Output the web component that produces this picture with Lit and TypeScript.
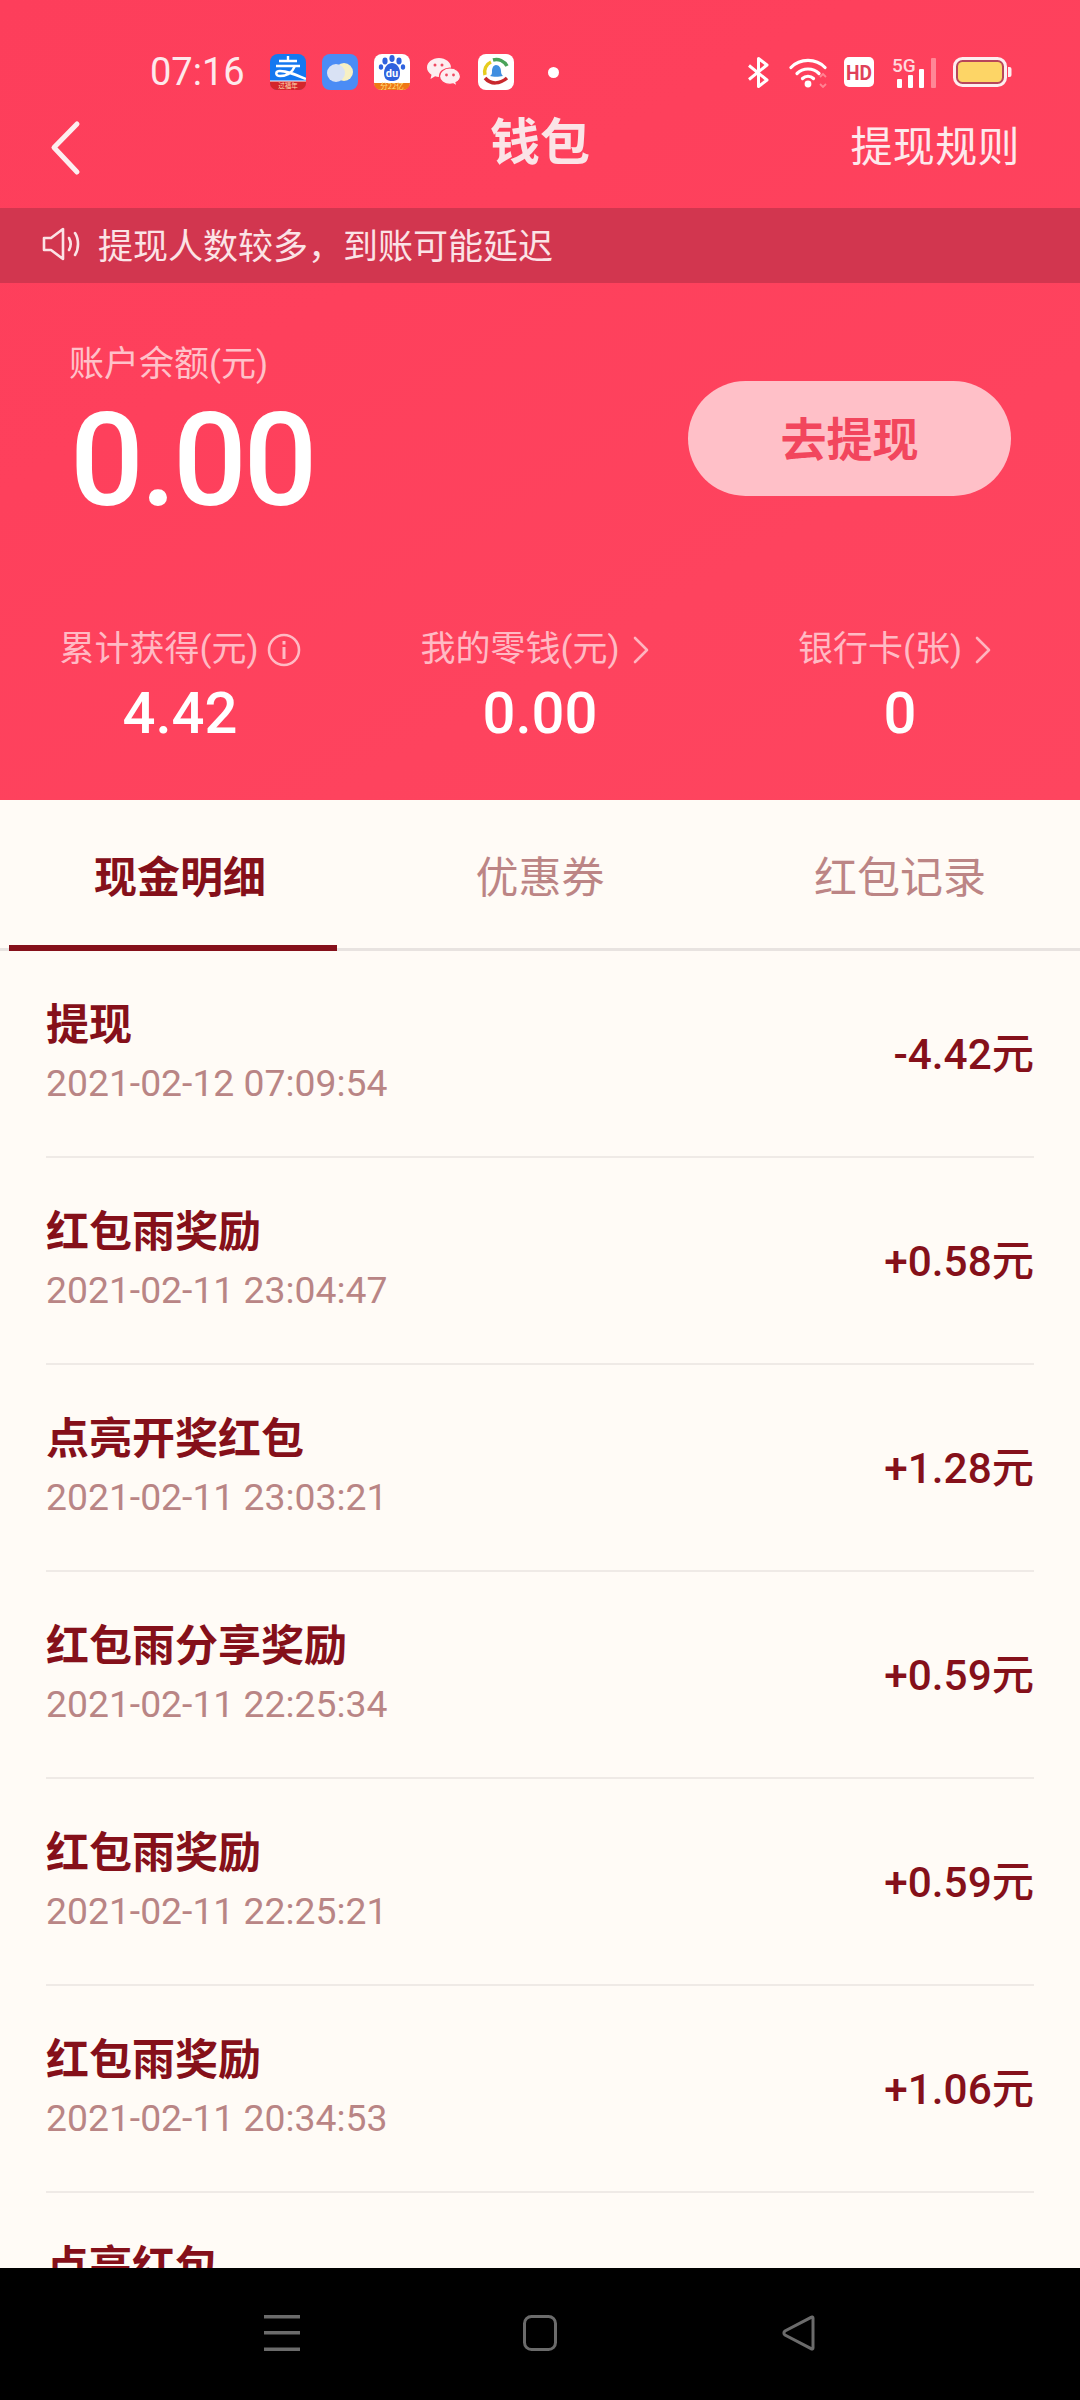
import { LitElement, html, css } from "lit";
import { customElement } from "lit/decorators.js";

const rows = [
  ["提现", "2021-02-12 07:09:54", "-4.42元"],
  ["红包雨奖励", "2021-02-11 23:04:47", "+0.58元"],
  ["点亮开奖红包", "2021-02-11 23:03:21", "+1.28元"],
  ["红包雨分享奖励", "2021-02-11 22:25:34", "+0.59元"],
  ["红包雨奖励", "2021-02-11 22:25:21", "+0.59元"],
  ["红包雨奖励", "2021-02-11 20:34:53", "+1.06元"],
  ["点亮红包", "", ""],
];

const chevron = html`<svg class="chev" width="18" height="30" viewBox="0 0 18 30"><path d="M3 3l12 12L3 27" fill="none" stroke="#ffb4bf" stroke-width="2.6" stroke-linecap="round" stroke-linejoin="round"/></svg>`;

@customElement("app-root")
export class AppRoot extends LitElement {
  static styles = css`
    :host { display: flex; flex-direction: column; width: 1080px; height: 2400px; overflow: hidden; background: #fffbf6;
      font-family: Roboto, "Noto Sans CJK SC", sans-serif; }
    .top { height: 800px; flex: none; display: flex; flex-direction: column;
      background: linear-gradient(150deg, #fd3e5b 0%, #fe405c 35%, #fe435e 70%, #fe455f 100%); }
    .status { height: 108px; flex: none; display: flex; align-items: center; padding: 36px 68px 0 150px; box-sizing: border-box; color: #fff; }
    .time { font-size: 38px; color: #fde9ec; width: 120px; flex: none; line-height: 1; }
    .apps { display: flex; gap: 16px; align-items: center; }
    .apps svg, .sys svg { display: block; flex: none; }
    .dot { width: 11px; height: 11px; border-radius: 50%; background: #fff; margin-left: 34px; flex: none; }
    .sys { margin-left: auto; display: flex; align-items: center; }
    .s1 { margin-right: 19px; }
    .s2 { margin-right: 15px; }
    .s3 { margin-right: 17px; }
    .s4 { margin-right: 16px; }
    .nav { height: 100px; flex: none; box-sizing: border-box; display: flex; align-items: center; justify-content: space-between; padding: 0 60px 20px 49px; position: relative; color: #fde9ec; }
    .nav h1 { position: absolute; left: 0; right: 0; top: 0; text-align: center; margin: 0; font-size: 50px; font-weight: 700; line-height: 70px; color: #fbe4e7; }
    .rules { font-size: 42px; line-height: 60px; letter-spacing: 0.4px; }
    .notice { height: 75px; flex: none; box-sizing: border-box; display: flex; align-items: center; gap: 16px; background: #d2364f; padding: 0 0 4px 42px; color: #fbe3e6; font-size: 35px; }
    .bal { display: flex; align-items: flex-start; justify-content: space-between; padding: 60px 69px 0 69px; height: 342px; box-sizing: border-box; flex: none; }
    .bal-label { font-size: 35px; line-height: 44px; color: #ffc1c9; }
    .bal-num { font-size: 130px; font-weight: 500; line-height: 120px; color: #fff; margin: 14px 0 0 1px; letter-spacing: -3.5px; }
    .btn { width: 323px; height: 115px; margin-top: 38px; border-radius: 58px; background: #ffc0c8; color: #f2465d; font-size: 46px; font-weight: 700;
      display: flex; align-items: center; justify-content: center; padding-bottom: 6px; box-sizing: border-box; }
    .stats { display: grid; grid-template-columns: repeat(3, 360px); }
    .stat { display: flex; flex-direction: column; align-items: center; gap: 3px; }
    .stat-label { display: flex; align-items: center; gap: 8px; font-size: 35px; line-height: 50px; color: #ffbac4; white-space: nowrap; }
    .chev { margin: 0 10px 0 4px; }
    .stat-val { font-size: 58px; font-weight: 500; line-height: 70px; color: #fff; }
    .tabs { height: 151px; flex: none; box-sizing: border-box; display: grid; grid-template-columns: repeat(3, 360px); border-bottom: 3px solid #e8e3e0; position: relative; }
    .tab { display: flex; align-items: center; justify-content: center; font-size: 43px; color: #bc8585; }
    .tab.on { color: #85101a; font-weight: 700; }
    .tabs::after { content: ""; position: absolute; left: 9px; width: 328px; bottom: -3px; height: 6px; background: #85101a; }
    .list { flex: 1; min-height: 0; overflow: hidden; padding: 0 46px; }
    .row { height: 207px; box-sizing: border-box; border-bottom: 2px solid #efeae6; display: flex; align-items: center; justify-content: space-between; }
    .left { padding-bottom: 5px; }
    .name { font-size: 43px; font-weight: 700; line-height: 60px; color: #85101a; }
    .date { font-size: 37.3px; line-height: 50px; min-height: 50px; color: #b98585; margin-top: 3px; }
    .amt { font-size: 42.3px; font-weight: 500; color: #85101a; margin-bottom: 6px; }
    .bar { height: 132px; flex: none; background: #000; display: flex; align-items: flex-start; padding-top: 47px; box-sizing: border-box; position: relative; }
    .bar-in { display: grid; grid-template-columns: 264px 36px 223px 34px 224px 36px; width: 100%; }
    .bar svg { display: block; }
  `;

  private appIcons() {
    return html`<div class="apps">
      <svg width="36" height="36" viewBox="0 0 36 36">
        <rect width="36" height="36" rx="8" fill="#1578f0"/>
        <path d="M0 27h36v2a7 7 0 0 1-7 7H7a7 7 0 0 1-7-7z" fill="#d4262c"/>
        <path d="M0 27c12 0 24 0 36 0" stroke="#fff" stroke-width="1"/>
        <path d="M9 7h18M18 2v5M6 12h24M25 12c-3 7-9 10-15 10-5 0-5-5 0-5 7 0 14 3 26 8" fill="none" stroke="#fff" stroke-width="2.400"/>
        <text x="18" y="34" font-size="6.500" fill="#ffdcae" text-anchor="middle" font-family="Noto Sans CJK SC">过福年</text>
      </svg>
      <svg width="36" height="36" viewBox="0 0 36 36">
        <rect width="36" height="36" rx="8" fill="#4b8cf5"/>
        <circle cx="22" cy="18" r="9" fill="#f6f0c4"/><circle cx="14" cy="19" r="9" fill="#d9e2f4"/>
      </svg>
      <svg width="36" height="36" viewBox="0 0 36 36">
        <rect width="36" height="36" rx="8" fill="#fff"/>
        <path d="M0 29h36v0a7 7 0 0 1-7 7H7a7 7 0 0 1-7-7z" fill="#ee7716"/>
        <g fill="#2f62de"><ellipse cx="11" cy="7" rx="2.600" ry="3.400"/><ellipse cx="25" cy="7" rx="2.600" ry="3.400"/><ellipse cx="18" cy="4.500" rx="2.600" ry="3.400"/><ellipse cx="7" cy="13" rx="2.200" ry="2.800"/><ellipse cx="29" cy="13" rx="2.200" ry="2.800"/><path d="M18 9c4 0 8 4 8 10 0 6-3 8-8 8s-8-2-8-8c0-6 4-10 8-10z"/></g>
        <text x="18" y="23" font-size="11" font-weight="700" fill="#fff" text-anchor="middle" font-family="Roboto">du</text>
        <text x="18" y="35" font-size="7.500" fill="#ffe27c" text-anchor="middle" font-family="Noto Sans CJK SC">分22亿</text>
      </svg>
      <svg width="36" height="36" viewBox="0 0 36 36">
        <path d="M13 4C6.500 4 1 8.300 1 13.500c0 3 1.800 5.400 4.500 7.200L4.500 25l4.600-2.700c1.300.4 2.600.6 3.900.6 6.500 0 12-4.200 12-9.400S19.500 4 13 4z" fill="#fdeef0"/>
        <path d="M24 14c-6 0-10.500 3.700-10.500 8.200S18 30.400 24 30.400c1 0 2.200-.2 3.200-.5l3.800 2.200-1-3.500c2.700-1.500 4.500-3.900 4.500-6.400C34.500 17.700 30 14 24 14z" fill="#fdeef0" stroke="#fe3f5b" stroke-width="1.200"/>
        <g fill="#f04a62"><circle cx="9" cy="11" r="1.500"/><circle cx="16" cy="11" r="1.500"/><circle cx="20.500" cy="21" r="1.400"/><circle cx="27.500" cy="21" r="1.400"/></g>
      </svg>
      <svg width="36" height="36" viewBox="0 0 36 36">
        <rect width="36" height="36" rx="8" fill="#fff"/>
        <path d="M7 21a11 11 0 0 1 6-13" fill="none" stroke="#e7cc1d" stroke-width="3.500"/>
        <path d="M15 6a12 12 0 0 1 14 6" fill="none" stroke="#4aa35a" stroke-width="3.500"/>
        <path d="M7 24c6 7 15 6 22 0" fill="none" stroke="#c8282d" stroke-width="3.500"/>
        <path d="M18 11c3 0 5 3 5 6s1 4 2 5c-4 1-10 1-13 0 2-1 2-3 2-5s1-6 4-6z" fill="#3f8ee0"/>
      </svg>
    </div>`;
  }

  private sysIcons() {
    return html`<div class="sys">
      <svg class="s1" width="23" height="31" viewBox="0 0 23 31"><path d="M2 8.500l18 14.500-8.500 6.500V1.500L20 8 2 22.500" fill="none" stroke="#fff" stroke-width="3" stroke-linejoin="round"/></svg>
      <svg class="s2" width="40" height="31" viewBox="0 0 40 31">
        <g fill="none" stroke="#fff" stroke-width="3.200" stroke-linecap="round"><path d="M2 10.500C11 1 27 1 36 10.500"/><path d="M8 16.500c6-6 16-6 22 0"/><path d="M13.500 21.500c3-3 8-3 11 0"/></g>
        <circle cx="19" cy="27" r="3.400" fill="#fff"/>
        <path d="M31 20l3-3 3 3M31 27l3 3 3-3" fill="none" stroke="#ff8493" stroke-width="1.800"/>
      </svg>
      <svg class="s3" width="30" height="30" viewBox="0 0 30 30"><rect width="30" height="30" rx="5" fill="#fff"/>
        <text x="15" y="23" font-size="21" font-weight="700" fill="#e0415a" text-anchor="middle" font-family="Roboto" textLength="26" lengthAdjust="spacingAndGlyphs">HD</text></svg>
      <svg class="s4" width="46" height="31" viewBox="0 0 46 31">
        <text x="1" y="15" font-size="19" font-weight="500" fill="#ffd9de" font-family="Roboto">5G</text>
        <rect x="6" y="22" width="5" height="9" rx="1" fill="#fff"/><rect x="17" y="18" width="5" height="13" rx="1" fill="#fff"/><rect x="28" y="12" width="5" height="19" rx="1" fill="#fff"/><rect x="40" y="1" width="5" height="30" rx="1" fill="#ff8796"/>
      </svg>
      <svg width="59" height="30" viewBox="0 0 59 30"><rect x="1.500" y="1.500" width="51" height="27" rx="8" fill="#b8465a" stroke="#fdeef0" stroke-width="3"/><rect x="5" y="5" width="44" height="20" rx="4.500" fill="#fdd566"/><path d="M55 10h1.500a2 2 0 0 1 2 2v6a2 2 0 0 1-2 2H55z" fill="#fdeef0"/></svg>
    </div>`;
  }

  render() {
    return html`
      <div class="top">
        <div class="status">
          <span class="time">07:16</span>
          ${this.appIcons()}
          <span class="dot"></span>
          ${this.sysIcons()}
        </div>
        <div class="nav">
          <svg width="32" height="56" viewBox="0 0 32 56"><path d="M28 4L5 27.500 28 52" fill="none" stroke="#fdeef0" stroke-width="5" stroke-linecap="round" stroke-linejoin="round"/></svg>
          <h1>钱包</h1>
          <span class="rules">提现规则</span>
        </div>
        <div class="notice">
          <svg width="40" height="34" viewBox="0 0 40 34"><path d="M2 11h7l12-9v30L9 23H2z" fill="none" stroke="#fbe3e6" stroke-width="2.600" stroke-linejoin="round"/><path d="M27 11c2 3.500 2 8.500 0 12M33 6c4 6 4 16 0 22" fill="none" stroke="#fbe3e6" stroke-width="2.600" stroke-linecap="round"/></svg>
          <span>提现人数较多，到账可能延迟</span>
        </div>
        <div class="bal">
          <div>
            <div class="bal-label">账户余额(元)</div>
            <div class="bal-num">0.00</div>
          </div>
          <div class="btn">去提现</div>
        </div>
        <div class="stats">
          <div class="stat">
            <div class="stat-label">累计获得(元)<svg width="34" height="34" viewBox="0 0 34 34"><circle cx="17" cy="17" r="15" fill="none" stroke="#ffbac4" stroke-width="2.600"/><rect x="15.500" y="14" width="3" height="12" fill="#ffbac4"/><rect x="15.500" y="8" width="3" height="3.500" fill="#ffbac4"/></svg></div>
            <div class="stat-val">4.42</div>
          </div>
          <div class="stat">
            <div class="stat-label">我的零钱(元) ${chevron}</div>
            <div class="stat-val">0.00</div>
          </div>
          <div class="stat">
            <div class="stat-label">银行卡(张) ${chevron}</div>
            <div class="stat-val">0</div>
          </div>
        </div>
      </div>
      <div class="tabs">
        <div class="tab on">现金明细</div>
        <div class="tab">优惠券</div>
        <div class="tab">红包记录</div>
      </div>
      <div class="list">
        ${rows.map((r) => html`<div class="row">
          <div class="left"><div class="name">${r[0]}</div><div class="date">${r[1]}</div></div>
          <div class="amt">${r[2]}</div>
        </div>`)}
      </div>
      <div class="bar">
        <div class="bar-in">
          <span></span>
          <svg width="36" height="36" viewBox="0 0 36 36"><g fill="#6b6b6b"><rect y="0" width="36" height="3.500"/><rect y="16" width="36" height="3.500"/><rect y="32.500" width="36" height="3.500"/></g></svg>
          <span></span>
          <svg width="34" height="36" viewBox="0 0 34 36"><rect x="1.500" y="1.500" width="31" height="33" rx="7" fill="none" stroke="#6b6b6b" stroke-width="3"/></svg>
          <span></span>
          <svg width="36" height="36" viewBox="0 0 36 36"><path d="M32 3v30c0 1-1 1.500-2 .6L4 20c-1.500-1.200-1.500-2.800 0-4L30 2.400c1-.9 2-.4 2 .6z" fill="none" stroke="#6b6b6b" stroke-width="3"/></svg>
        </div>
      </div>
    `;
  }
}
